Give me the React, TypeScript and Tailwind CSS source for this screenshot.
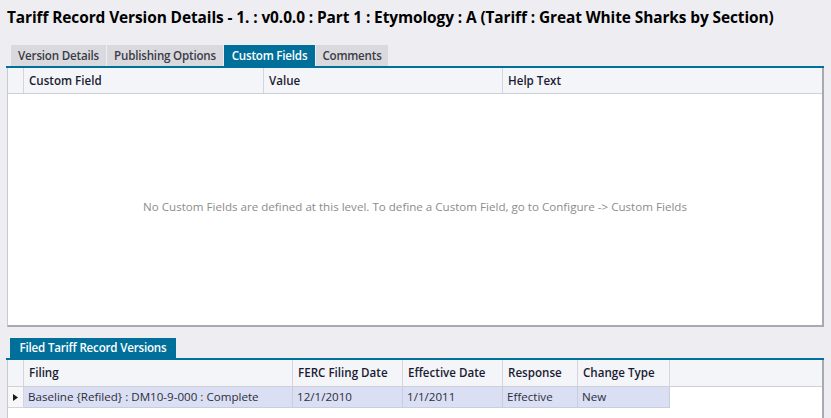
import React from "react";

const tabs = [
	{ label: "Version Details", w: "w-[95px]" },
	{ label: "Publishing Options", w: "w-[116px]" },
	{ label: "Custom Fields", w: "w-[91px]", active: true },
	{ label: "Comments", w: "w-[72px]" },
];

const HeaderCell: React.FC<{ label?: string; w: string }> = ({ label, w }) => (
	<div className={`${w} shrink-0 h-full flex items-center pl-[5px] border-r border-[#d4d5dc] font-semibold text-[#1b1b33]`}>
		{label}
	</div>
);

const App: React.FC = () => {
	return (
		<div
			className="w-[831px] h-[418px] overflow-hidden bg-[#eeeef2] text-[11.6px]"
			style={{ fontFamily: '"Open Sans", "Noto Sans", sans-serif' }}
		>
			<h1 className="pl-[7px] pt-[5px] h-[45px] text-[15.45px] font-bold text-black leading-[24px] tracking-[-0.1px]">
				Tariff Record Version Details - 1. : v0.0.0 : Part 1 : Etymology : A (Tariff : Great White Sharks by Section)
			</h1>

			<div className="ml-[6px] w-[818px]">
				{/* tab strip */}
				<div className="flex gap-[1px] pl-[5px] h-[21px] items-end">
					{tabs.map((t) => (
						<div
							key={t.label}
							className={`${t.w} h-[21px] flex items-center justify-center font-semibold tracking-[-0.2px] ${
								t.active ? "bg-[#00709b] text-white" : "bg-[#dadade] text-[#3a3a48]"
							}`}
						>
							{t.label}
						</div>
					))}
				</div>
				<div className="h-[2px] bg-[#00709b]" />

				{/* custom fields grid */}
				<div className="ml-[1px] h-[259px] bg-white border-l border-[#c9c9cf] border-r-2 border-b-2 border-r-[#a9a9b2] border-b-[#a9a9b2] flex flex-col">
					<div className="h-[26px] flex bg-[#f4f5f8] border-b border-[#cfd0d7]">
						<HeaderCell w="w-[16px]" />
						<HeaderCell label="Custom Field" w="w-[240px]" />
						<HeaderCell label="Value" w="w-[239px]" />
						<div className="flex-1 h-full flex items-center pl-[5px] font-semibold text-[#1b1b33]">Help Text</div>
					</div>
					<div className="flex-1 flex items-center justify-center pb-[6px] text-[#8c8c8c]">
						No Custom Fields are defined at this level. To define a Custom Field, go to Configure -&gt; Custom Fields
					</div>
				</div>

				{/* filed versions */}
				<div className="mt-[11px] pl-[4px] h-[20px] flex">
					<div className="w-[166px] h-full bg-[#00709b] text-white font-semibold tracking-[-0.2px] flex items-center justify-center">
						Filed Tariff Record Versions
					</div>
				</div>
				<div className="h-[2px] bg-[#00709b]" />
				<div className="ml-[1px] h-[80px] bg-white border-l border-[#c9c9cf] border-r-2 border-r-[#a9a9b2]">
					<div className="h-[27px] flex bg-[#f4f5f8] border-b border-[#cfd0d7]">
						<HeaderCell w="w-[16px]" />
						<HeaderCell label="Filing" w="w-[269px]" />
						<HeaderCell label="FERC Filing Date" w="w-[110px]" />
						<HeaderCell label="Effective Date" w="w-[100px]" />
						<HeaderCell label="Response" w="w-[75px]" />
						<HeaderCell label="Change Type" w="w-[92px]" />
					</div>
					<div className="h-[21px] flex text-[#2e2e3a]">
						<div className="w-[16px] h-full flex items-center justify-center border-r border-b border-[#d4d5dc] bg-[#f7f7f9]">
							<svg width="5" height="7" viewBox="0 0 5 7">
								<path d="M0 0 L5 3.5 L0 7 Z" fill="#1a1a1a" />
							</svg>
						</div>
						{[
							{ v: "Baseline {Refiled} : DM10-9-000 : Complete", w: "w-[269px]" },
							{ v: "12/1/2010", w: "w-[110px]" },
							{ v: "1/1/2011", w: "w-[100px]" },
							{ v: "Effective", w: "w-[75px]" },
							{ v: "New", w: "w-[92px]" },
						].map((c) => (
							<div
								key={c.v}
								className={`${c.w} h-full flex items-center pl-[4px] bg-[#dadff3] border-r border-b border-[#c9cde2]`}
							>
								{c.v}
							</div>
						))}
					</div>
				</div>
			</div>
		</div>
	);
};

export default App;
